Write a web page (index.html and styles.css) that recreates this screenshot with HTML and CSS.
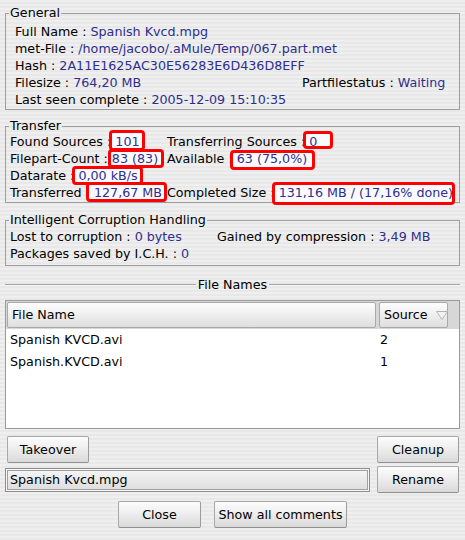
FILE: index.html
```html
<!DOCTYPE html>
<html>
<head>
<meta charset="utf-8">
<link rel="stylesheet" href="styles.css">
</head>
<body>
<div class="page">
  <fieldset class="group g-general">
    <legend>General</legend>
    <div class="rows">
      <div class="row">Full Name : <span class="v">Spanish Kvcd.mpg</span></div>
      <div class="row">met-File : <span class="v">/home/jacobo/.aMule/Temp/067.part.met</span></div>
      <div class="row">Hash : <span class="v">2A11E1625AC30E56283E6D436D8EFF</span></div>
      <div class="grid grid-general">
        <div>Filesize : <span class="v">764,20 MB</span></div>
        <div>Partfilestatus : <span class="v">Waiting</span></div>
      </div>
      <div class="row">Last seen complete : <span class="v">2005-12-09 15:10:35</span></div>
    </div>
  </fieldset>

  <fieldset class="group g-transfer">
    <legend>Transfer</legend>
    <div class="rows">
      <div class="grid grid-transfer">
        <div>Found Sources : <span class="v hl hl-1">101</span></div>
        <div>Transferring Sources : <span class="v hl hl-2">0</span></div>
        <div>Filepart-Count : <span class="v hl hl-3">83 (83)</span></div>
        <div>Available : <span class="v hl hl-4">63 (75,0%)</span></div>
        <div>Datarate : <span class="v hl hl-5">0,00 kB/s</span></div>
        <div></div>
        <div>Transferred : <span class="v hl hl-6">127,67 MB</span></div>
        <div>Completed Size : <span class="v hl hl-7">131,16 MB / (17,16% done)</span></div>
      </div>
    </div>
  </fieldset>

  <fieldset class="group g-ich">
    <legend>Intelligent Corruption Handling</legend>
    <div class="rows">
      <div class="grid grid-ich">
        <div>Lost to corruption : <span class="v">0 bytes</span></div>
        <div>Gained by compression : <span class="v">3,49 MB</span></div>
        <div>Packages saved by I.C.H. : <span class="v">0</span></div>
        <div></div>
      </div>
    </div>
  </fieldset>

  <div class="sep"><span class="sep-line"></span><span class="sep-text">File Names</span><span class="sep-line"></span></div>

  <div class="list">
    <div class="list-head">
      <div class="hcell hcell-name">File Name</div>
      <div class="hcell hcell-src">Source
        <svg class="sort" width="12" height="9" viewBox="0 0 12 9"><polygon points="0.5,0.5 11.5,0.5 6,8.5" fill="#f2f2f2" stroke="#b4b4b4" stroke-width="1"/></svg>
      </div>
    </div>
    <div class="list-row"><span class="c-name">Spanish KVCD.avi</span><span class="c-src">2</span></div>
    <div class="list-row"><span class="c-name">Spanish.KVCD.avi</span><span class="c-src">1</span></div>
  </div>

  <div class="btn-row row-1">
    <button class="btn btn-take">Takeover</button>
    <button class="btn btn-side">Cleanup</button>
  </div>
  <div class="btn-row row-2">
    <div class="field">Spanish Kvcd.mpg</div>
    <button class="btn btn-side">Rename</button>
  </div>
  <div class="btn-row row-3">
    <button class="btn btn-close">Close</button>
    <button class="btn btn-comments">Show all comments</button>
  </div>
</div>
</body>
</html>
```

FILE: styles.css
```css
html, body {
  margin: 0;
  padding: 0;
}
body {
  width: 465px;
  height: 540px;
  overflow: hidden;
  font-family: "DejaVu Sans", "Liberation Sans", sans-serif;
  font-size: 12.7px;
  color: #000;
  background: repeating-linear-gradient(to bottom, #efefef 0px, #efefef 2px, #e8e8e8 2px, #e8e8e8 4px);
}
.page {
  padding: 0 5px;
  display: flex;
  flex-direction: column;
}

/* group boxes */
.group {
  margin: 0;
  padding: 0 4px 0 3px;
  border: 1px solid #9e9e9e;
  min-width: 0;
}
.group legend {
  padding: 0 1px;
  line-height: 14px;
  height: 14px;
}
.rows {
  padding-left: 1px;
  white-space: nowrap;
}
.row, .grid > div {
  line-height: 17px;
  height: 17px;
}
.grid {
  display: grid;
}
.v {
  color: #2e2e8e;
}

.g-general { margin-top: 6px; }
.g-general .rows { padding: 3px 0 1px 6px; }
.grid-general { grid-template-columns: 287px auto; }

.g-transfer { margin-top: 9px; }
.g-transfer .rows { padding-bottom: 1px; }
.grid-transfer { grid-template-columns: 157px auto; }

.g-ich { margin-top: 10px; }
.g-ich .rows { padding: 1px 0 3px 1px; }
.grid-ich { grid-template-columns: 207px auto; }

/* red annotation boxes */
.hl {
  position: relative;
  z-index: 0;
}
.hl::before {
  content: "";
  position: absolute;
  z-index: -1;
  top: -4px; bottom: -2px; left: -6px; right: -5px;
  border: 3px solid #f00;
  border-radius: 4px;
  background: #fbfbff;
}
.hl-2::before { top: -3px; bottom: 0; left: -6px; right: -16px; }
.hl-3::before { top: -2px; bottom: -2px; left: -4px; right: -6px; }
.hl-4::before { top: -1px; bottom: -4px; left: -7px; right: -8px; }
.hl-5::before { top: -2px; bottom: -2px; left: -6px; right: -5px; }
.hl-6::before { top: -3px; bottom: -2px; left: -8px; right: -5px; }
.hl-7::before { top: -3px; bottom: -5px; left: -7px; right: -2px; }

/* separator */
.sep {
  margin-top: 12px;
  height: 14px;
  line-height: 14px;
  display: flex;
  align-items: center;
}
.sep-line {
  flex: 1;
  height: 0;
  border-top: 1px solid #a4a4a4;
  border-bottom: 1px solid #f8f8f8;
}
.sep-text {
  padding: 0 2px;
}

/* list */
.list {
  margin-top: 8px;
  height: 129px;
  box-sizing: border-box;
  border: 1px solid #9a9a9a;
  background: #fff;
}
.list-head {
  display: flex;
  gap: 3px;
  padding: 1px 0 1px 1px;
  background: #d7d7d7;
}
.hcell {
  height: 26px;
  box-sizing: border-box;
  line-height: 24px;
  border: 1px solid #a9a9a9;
  border-radius: 2px;
  background: linear-gradient(to bottom, #fdfdfd 0%, #f0f0f0 45%, #dedede 100%);
  padding-left: 4px;
}
.hcell-name { width: 369px; }
.hcell-src {
  width: 69px;
  display: flex;
  justify-content: space-between;
  align-items: center;
  padding-right: 0;
}
.sort { margin-top: 1px; margin-right: -1px; }
.list-row {
  display: flex;
  height: 22px;
  line-height: 22px;
}
.c-name { width: 372px; padding-left: 4px; box-sizing: border-box; }
.c-src { padding-left: 2px; }

/* buttons */
.btn-row {
  display: flex;
  justify-content: space-between;
  align-items: center;
}
.row-1 { margin-top: 7px; }
.row-2 { margin-top: 3px; }
.row-3 { margin-top: 8px; justify-content: center; gap: 13px; }
.btn {
  height: 27px;
  box-sizing: border-box;
  border: 1px solid #a8a8a8;
  border-bottom-color: #909090;
  border-right-color: #9c9c9c;
  border-radius: 2px;
  background: linear-gradient(to bottom, #fcfcfc 0%, #f0f0f0 40%, #d9d9d9 100%);
  font-family: "DejaVu Sans", "Liberation Sans", sans-serif;
  font-size: 12.7px;
  color: #000;
  padding: 0;
  margin: 0;
}
.btn-take { width: 82px; margin-left: 2px; }
.btn-side { width: 82px; margin-right: 1px; }
.btn-close { width: 83px; }
.btn-comments { width: 133px; }
.field {
  width: 365px;
  height: 24px;
  box-sizing: border-box;
  border: 1px solid #8e8e8e;
  box-shadow: inset 0 0 0 1px #f6f6f6, inset 0 0 0 2px #a0a0a0;
  background: linear-gradient(to bottom, #f6f6f6 0%, #e9e9e9 50%, #dcdcdc 100%);
  line-height: 22px;
  padding-left: 4px;
  white-space: nowrap;
}
```
